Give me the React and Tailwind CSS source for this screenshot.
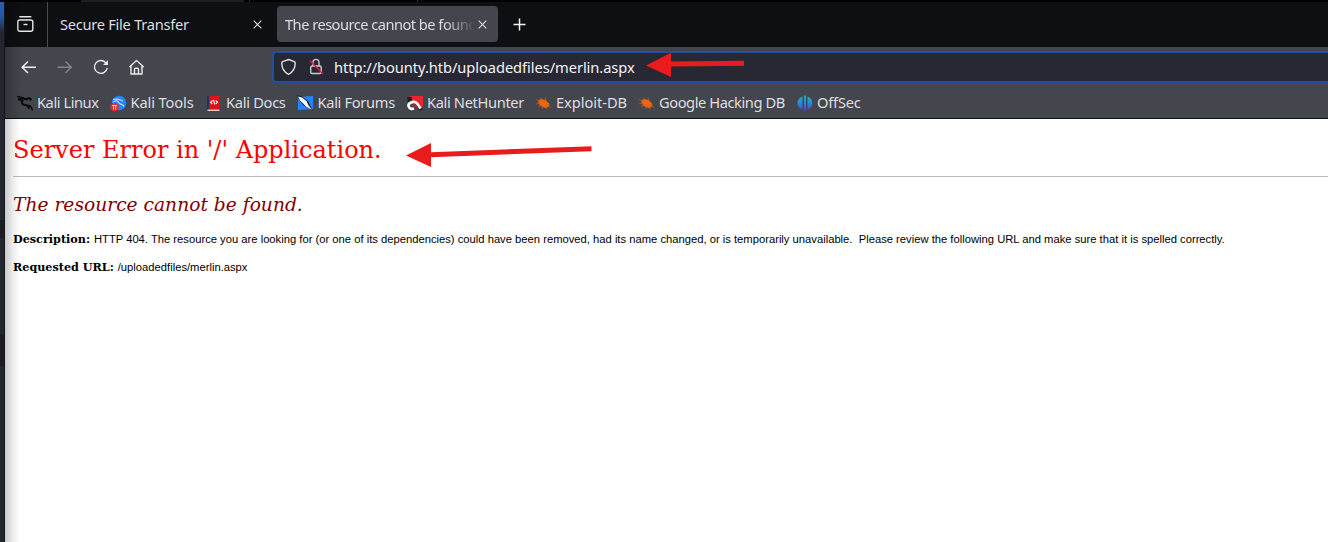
import React from 'react';

const KaliDragon = () => (
  <svg width="17" height="17" viewBox="0 0 17 17" fill="none" stroke="#08090b">
    <path d="M0 1.500l4 .7 4 1.300M1 4l3-.5M1.500 5.500l3-.8" strokeWidth="1.300" />
    <path d="M4 3c2 0 3 1 5 1.200l3-1 2.500 1.600M6 4.500C3.500 7 5 9.500 8 10s4.500.8 5.500 2" strokeWidth="2" />
    <path d="M13 10.500c1.500 1 2 2.500 2.500 5M10 10.500l2.500 3.500" strokeWidth="1.400" />
  </svg>
);
const KaliTools = () => (
  <svg width="17" height="17" viewBox="0 0 17 17">
    <circle cx="9" cy="8" r="7.300" fill="#2383fa" />
    <path d="M3 4.500l5-.5 5 2M3 7l4-1.500M8 5.500c-1 4 4 2.500 6 6" fill="none" stroke="#c4ddfb" strokeWidth="1.200" />
    <circle cx="4.500" cy="12" r="4.300" fill="#e62930" />
    <path d="M2 10.500h5M3.500 10.500v4M5.700 10.500v4" fill="none" stroke="#f5cdd0" strokeWidth="1" />
  </svg>
);
const KaliDocs = () => (
  <svg width="17" height="17" viewBox="0 0 17 17">
    <path d="M1 1h2v14H1z" fill="#14346c" />
    <path d="M3 1h10.500v13H3z" fill="#df1115" />
    <path d="M1.500 14.500h12V16h-12z" fill="#d9c9cb" />
    <path d="M6.500 5.500L4.700 7.300l1.600 1.700M9.500 5.500l2 1.600-1.600 1.700M7.400 5l1.500 4.500" fill="none" stroke="#fff" strokeWidth="1.100" />
  </svg>
);
const KaliForums = () => (
  <svg width="17" height="17" viewBox="0 0 17 17">
    <path d="M1 2L16 1v13L1 15z" fill="#2584fb" />
    <path d="M0 0l5 1.500 6 4.500 2 4 3 6-5-3-5-3L2 5z" fill="#151c28" />
    <path d="M1 1.500l4 1L9.500 6l1.800 4 3.700 5-6-3.500-3-3L3 5.500z" fill="#f8fbff" />
  </svg>
);
const NetHunter = () => (
  <svg width="17" height="17" viewBox="0 0 17 17">
    <path d="M3 1h13v10l-3 3L3 3z" fill="#e9272f" />
    <path d="M0 2h5v3L1 8zM10 12l6 2-3 2z" fill="#202126" />
    <path d="M7 13.500C1 15 0 9 4 7.500c4-2 6 0 9.500 6" fill="none" stroke="#fff" strokeWidth="2.700" />
    <path d="M5 11c2-2 4.500-.5 5 2" fill="none" stroke="#bd252d" strokeWidth="1.800" />
  </svg>
);
const Bug = () => (
  <svg width="17" height="17" viewBox="0 0 17 17">
    <path d="M2 5.500L5 4l4.500 1L13.500 9l-1 3-3 1-4-1.500L3 9z" fill="#ee650e" />
    <path d="M0 4.500l4 1.500M4.500 2.500l2 2.500M9 2.500l1 4M0 9l4-1M2 11.500l4-1.500M6 14l2-3M11 14l-1-3M15 12.500l-4-3.500" fill="none" stroke="#c95b1c" strokeWidth=".8" />
  </svg>
);
const OffSec = () => (
  <svg width="17" height="17" viewBox="0 0 17 17">
    <defs>
      <linearGradient id="offsec" x1="0" y1="0" x2="0" y2="1">
        <stop stopColor="#18b4cc" /><stop offset=".5" stopColor="#2688dc" /><stop offset="1" stopColor="#5930c9" />
      </linearGradient>
    </defs>
    <path d="M5.500 1.500v13C2.500 14 .5 11 .5 8s2-5.500 5-6.500zM7 .5h2v16H7zM10.500 1.500c3 1 4.800 3.500 4.800 6.500s-1.800 6-4.800 6.500z" fill="url(#offsec)" />
  </svg>
);

const bookmarks = [
  { label: 'Kali Linux', Icon: KaliDragon, box: 'w-[93.500px]', text: 'tracking-[-0.45px]' },
  { label: 'Kali Tools', Icon: KaliTools, box: 'w-[95.500px]', text: 'tracking-[-0.12px]' },
  { label: 'Kali Docs', Icon: KaliDocs, box: 'w-[91.500px]', text: 'tracking-[-0.3px]' },
  { label: 'Kali Forums', Icon: KaliForums, box: 'w-[109.500px]', text: 'tracking-[-0.33px]' },
  { label: 'Kali NetHunter', Icon: NetHunter, box: 'w-[129px]', text: 'tracking-[-0.36px]' },
  { label: 'Exploit-DB', Icon: Bug, box: 'w-[103px]', text: 'tracking-[-0.05px]' },
  { label: 'Google Hacking DB', Icon: Bug, box: 'w-[158px]', text: 'tracking-[-0.43px]' },
  { label: 'OffSec', Icon: OffSec, box: 'w-[80px]', text: 'tracking-[-0.2px]' },
];

const Close = () => (
  <svg className="block" width="9" height="9" viewBox="0 0 9 9" stroke="#dedee0" strokeWidth="1.100"><path d="M.7.700l7.600 7.600M8.300.700L.7 8.300" /></svg>
);

function TabStrip() {
  return (
    <div className="flex h-[45px] bg-[#0e0f13] text-[14.670px] leading-[22px] text-[#dddde0]">
      <div className="flex w-[43px] border-r border-[#4b4c50] pl-3 pt-[13px]">
        <svg width="17" height="18" viewBox="0 0 17 18" fill="none" stroke="#e7e7e9" strokeWidth="1.400">
          <path d="M2.800 1.700h11" strokeLinecap="round" /><rect x=".8" y="5" width="15" height="11.300" rx="2" /><path d="M6.500 9.500h4" />
        </svg>
      </div>
      <div className="flex w-[229px] items-center pl-3">
        <span className="w-[193px] whitespace-nowrap pb-px tracking-[-0.28px]">Secure File Transfer</span>
        <Close />
      </div>
      <div className="mt-1 flex h-9 w-[221px] items-center rounded-[4px] bg-[#44464d] pl-2">
        <span className="mr-[3px] w-[190px] overflow-hidden whitespace-nowrap tracking-[-0.53px] [mask-image:linear-gradient(to_right,black_84%,transparent)]">The resource cannot be found</span>
        <Close />
      </div>
      <svg className="ml-[15px] mt-4" width="13" height="13" viewBox="0 0 13 13" stroke="#f2f2f3" strokeWidth="1.500"><path d="M6.500.5v12M.5 6.500h12" /></svg>
    </div>
  );
}

function Toolbar() {
  return (
    <div className="flex h-[41px] bg-[#44464d]">
      <div className="flex w-[267px] shrink-0 gap-5 pl-4 pt-[12px]">
        <svg width="16" height="16" viewBox="0 0 16 16" fill="none" stroke="#f0f0f1" strokeWidth="1.500"><path d="M15 8.300H1.300M7 2.500L1.200 8.300 7 14" /></svg>
        <svg width="16" height="16" viewBox="0 0 16 16" fill="none" stroke="#85868a" strokeWidth="1.400"><path d="M.5 8.300h13.700M8.500 2.500l5.800 5.800L8.500 14" /></svg>
        <svg width="16" height="16" viewBox="0 0 16 16" fill="none" stroke="#ececee" strokeWidth="1.400"><path d="M13.100 4.200A6.400 6.400 0 1 0 14.200 9" /><path d="M15 1v5h-5z" fill="#ececee" stroke="none" /></svg>
        <svg width="16" height="16" viewBox="0 0 16 16" fill="none" stroke="#ececee" strokeWidth="1.400" strokeLinejoin="round"><path d="M.5 8L7.500 1.500 14.700 8M2 7v8h11V7M5.500 15v-4.500c0-1 .5-1.300 1-1.300h2c.6 0 1 .4 1 1.300V15" /></svg>
      </div>
      <div className="relative mt-1 flex h-8 flex-1 rounded-l-[4px] border-2 border-r-0 border-[#21519e] bg-[#272833]">
        <svg className="ml-[5.500px] mt-[5px] shrink-0" width="17" height="18" viewBox="0 0 17 18" fill="none" stroke="#e2e2e4" strokeWidth="1.400"><path d="M8.500 1.500l5.800 2.100c.7.300.9.700.9 1.400 0 5.200-2 9-6.700 11.300C3.800 14 1.800 10.200 1.800 5c0-.7.2-1.100.9-1.400z" /></svg>
        <svg className="ml-[12.500px] mt-[5px] shrink-0" width="15" height="18" viewBox="0 0 15 18" fill="none" stroke="#cbcbd0" strokeWidth="1.400"><path d="M4 8V4.700c0-4.400 6-4.400 6 0V8" /><rect x="1.700" y="8" width="10.500" height="7.500" rx="1.500" /><path d="M.7 2.500L14 16" stroke="#ed164c" strokeWidth="1.300" /></svg>
        <span className="ml-[10px] mt-px w-[302px] whitespace-nowrap text-[14.670px] leading-[26px] tracking-[-0.06px] text-[#f4f4f7]">http://bounty.htb/uploadedfiles/merlin.aspx</span>
        <svg className="absolute left-[372px] top-0" width="100" height="26" viewBox="0 0 100 26" fill="#e91c1c"><path d="M0 12.500L25-.3V8.500L98 7.800v5L25 13.600V24z" /></svg>
      </div>
    </div>
  );
}

function ErrorPage() {
  return (
    <main className="relative h-[423px] bg-white bg-[linear-gradient(to_right,#c9c9c9,#ededed_8px,#fff_15px)] bg-no-repeat pl-2 text-black">
      <h1 className="h-[57px] pt-[14px] font-[DejaVu_Serif,serif] text-[24px] leading-[34px] text-[#ff0000]">Server Error in '/' Application.</h1>
      <div className="h-px bg-[#b9b9b9]" />
      <h2 className="pt-[15px] font-[DejaVu_Serif,serif] text-[18.670px] italic leading-[26px] text-[#800000]">The resource cannot be found.</h2>
      <p className="mt-[13px] whitespace-pre font-['Liberation_Sans',sans-serif] text-[11.220px] leading-4"><b className="font-[DejaVu_Serif,serif] text-[11.200px]">Description: </b>HTTP 404. The resource you are looking for (or one of its dependencies) could have been removed, had its name changed, or is temporarily unavailable.&nbsp; Please review the following URL and make sure that it is spelled correctly.</p>
      <p className="mt-3 whitespace-pre font-['Liberation_Sans',sans-serif] text-[11.220px] leading-4"><b className="font-[DejaVu_Serif,serif] text-[11.200px]">Requested URL: </b>/uploadedfiles/merlin.aspx</p>
      <svg className="absolute left-[401px] top-6" width="188" height="26" viewBox="0 0 188 26" fill="#e91c1c"><path d="M0 12.500L25 0V9.200L185.500 3.300v5L25 14.200V24z" /></svg>
    </main>
  );
}

export default function App() {
  return (
    <div className="flex h-[542px] w-[1328px] flex-col overflow-hidden bg-black font-['Noto_Sans',sans-serif]">
      <div className="flex h-[2px] shrink-0"><div className="w-[81px]" /><div className="w-[163px] bg-[#1c1e1f]" /><div className="ml-[5px] w-px bg-[#333]" /><div className="ml-[167px] w-px bg-[#333]" /></div>
      <div className="flex h-[540px]">
        <aside className="flex w-[5px] shrink-0 flex-col border-r border-[#14161b] bg-[#23262e]">
          <div className="h-[30px] bg-gradient-to-b from-[#245fbd] via-[#2456a6] to-[#23262e]" />
          <div className="mt-[188px] h-[18px] bg-[#1c1d21]" />
          <div className="mt-[96px] h-8 bg-[#1c1d21]" />
        </aside>
        <div className="relative w-[1323px]">
          <TabStrip />
          <Toolbar />
          <nav className="flex h-[31px] border-b border-[#0b0c10] bg-[#44464d] pl-[11.500px] text-[14.670px] text-[#dedfe2]">
            {bookmarks.map(({ label, Icon, box, text }) => (
              <div key={label} className={`flex shrink-0 items-start ${box}`}>
                <span className="mt-[7px] shrink-0"><Icon /></span>
                <span className={`ml-[3.500px] shrink-0 whitespace-nowrap leading-[29px] ${text}`}>{label}</span>
              </div>
            ))}
          </nav>
          <ErrorPage />
          <div className="pointer-events-none absolute left-0 top-0 h-[116px] w-4 bg-gradient-to-r from-black/25 to-transparent" />
        </div>
      </div>
    </div>
  );
}
